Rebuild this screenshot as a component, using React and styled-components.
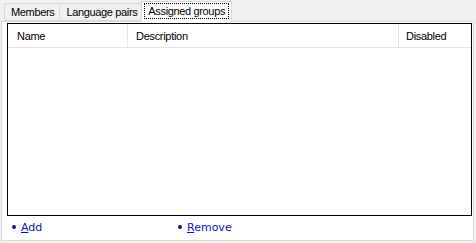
import React from "react";
import styled, { createGlobalStyle } from "styled-components";

const Global = createGlobalStyle`
  html, body { margin: 0; padding: 0; background: #f0f0f0; }
  body { font-family: "Liberation Sans", Arial, sans-serif; font-size: 11px; color: #000; }
`;

const Window = styled.div`
  width: 476px;
  height: 243px;
  display: flex;
  flex-direction: column;
  background: #f0f0f0;
  box-sizing: border-box;
  padding: 1px 2px 2px 1px;
`;

const TabStrip = styled.div`
  display: flex;
  align-items: flex-end;
  height: 20px;
  padding-left: 3px;
  position: relative;
  z-index: 1;
  letter-spacing: -0.35px;
`;

const Tab = styled.div`
  box-sizing: border-box;
  height: ${(p) => (p.$active ? "21px" : "18px")};
  margin-bottom: ${(p) => (p.$active ? "-1px" : "0")};
  margin-left: ${(p) => (p.$active ? "-2px" : "0")};
  margin-right: ${(p) => (p.$active ? "-2px" : "0")};
  padding: ${(p) => (p.$active ? "2px 3px 0 3px" : "2px 5px 0 6px")};
  border: 1px solid #d9d9d9;
  border-bottom: ${(p) => (p.$active ? "none" : "1px solid #d9d9d9")};
  border-left: ${(p) => (p.$first || p.$active ? "1px solid #d9d9d9" : "none")};
  background: ${(p) => (p.$active ? "#ffffff" : "#f0f0f0")};
  white-space: nowrap;
  line-height: 13px;
  position: relative;
  z-index: ${(p) => (p.$active ? 2 : 1)};
`;

const FocusLabel = styled.span`
  display: inline-block;
  outline: 1px dotted #000;
  outline-offset: 0;
  padding: 0 3px 0 3px;
  line-height: 14px;
`;

const Panel = styled.div`
  flex: 1;
  box-sizing: border-box;
  background: #ffffff;
  border: 1px solid #d9d9d9;
  display: flex;
  flex-direction: column;
  padding: 1px 2px 0 5px;
`;

const ListView = styled.div`
  box-sizing: border-box;
  width: 465px;
  height: 193px;
  border: 1px solid #000;
  background: #fff;
  display: flex;
  flex-direction: column;
`;

const HeaderRow = styled.div`
  display: grid;
  grid-template-columns: 120px 271px 1fr;
  height: 24px;
  box-sizing: border-box;
  border-bottom: 1px solid #e5e5e5;
  letter-spacing: -0.3px;
`;

const HeaderCell = styled.div`
  display: flex;
  align-items: center;
  padding-left: ${(p) => p.$pad || 5}px;
  border-right: ${(p) => (p.$last ? "none" : "1px solid #e5e5e5")};
  color: #000;
  font-size: 11px;
`;

const Links = styled.div`
  display: grid;
  grid-template-columns: 166px auto 1fr;
  padding: 4px 0 0 5px;
  height: 14px;
  align-items: center;
`;

const LinkItem = styled.a`
  display: inline-flex;
  align-items: center;
  gap: 5px;
  font-family: "DejaVu Sans", Verdana, sans-serif;
  font-size: 11px;
  color: #1010c8;
  text-decoration: none;
  cursor: pointer;
`;

const Bullet = styled.span`
  width: 4px;
  height: 4px;
  border-radius: 50%;
  background: #101088;
  display: inline-block;
`;

const Key = styled.span`
  text-decoration: underline;
`;

export default function App() {
  return (
    <>
      <Global />
      <Window>
        <TabStrip>
          <Tab $first>Members</Tab>
          <Tab>Language pairs</Tab>
          <Tab $active>
            <FocusLabel>Assigned groups</FocusLabel>
          </Tab>
        </TabStrip>
        <Panel>
          <ListView>
            <HeaderRow>
              <HeaderCell $pad={9}>Name</HeaderCell>
              <HeaderCell $pad={8}>Description</HeaderCell>
              <HeaderCell $pad={7} $last>Disabled</HeaderCell>
            </HeaderRow>
          </ListView>
          <Links>
            <LinkItem>
              <Bullet />
              <span>
                <Key>A</Key>dd
              </span>
            </LinkItem>
            <LinkItem>
              <Bullet />
              <span>
                <Key>R</Key>emove
              </span>
            </LinkItem>
          </Links>
        </Panel>
      </Window>
    </>
  );
}
